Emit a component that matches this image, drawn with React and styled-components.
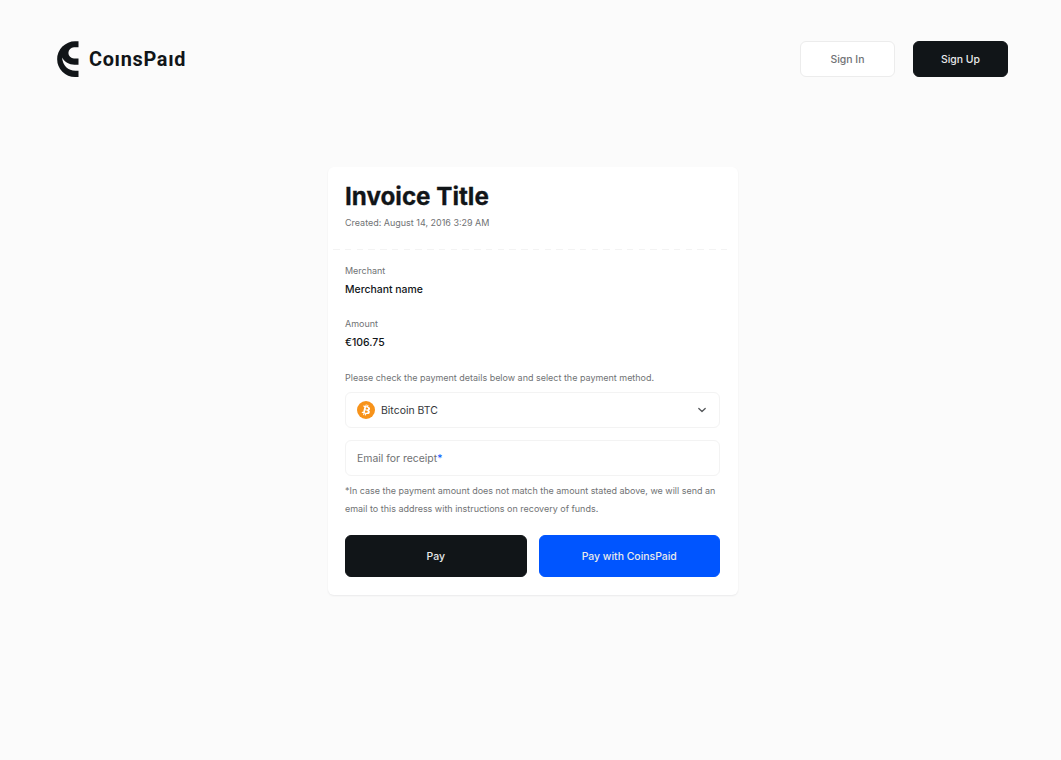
import React from "react";
import styled, { createGlobalStyle, css } from "styled-components";

const Global = createGlobalStyle`
  * { box-sizing: border-box; }
  body { margin: 0; background: #fbfbfb; font-family: Inter, "Liberation Sans", sans-serif; color: #111518; }
  button, input { font-family: inherit; }
`;

const Page = styled.div`
  min-height: 760px;
  display: flex;
  flex-direction: column;
  align-items: center;
`;

const Header = styled.header`
  width: 100%;
  height: 118px;
  padding: 0 53px 0 57px;
  display: flex;
  align-items: center;
  justify-content: space-between;
`;

const Logo = styled.svg`
  display: block;
  width: 132px;
  height: 36px;
`;

const Wordmark = styled.text`
  font-family: Roboto, sans-serif;
  font-size: 20.5px;
  font-weight: 700;
  fill: #111518;
`;

const Nav = styled.nav`
  display: flex;
  gap: 18px;
`;

const Button = styled.button`
  border: 1px solid transparent;
  border-radius: 6px;
  padding: 0;
  font-size: 10.43px;
  font-weight: 500;
  color: #e9eaea;
  background: ${(p) => (p.$tone === "blue" ? "#0055ff" : "#111518")};
  border-color: ${(p) => (p.$tone === "blue" ? "#0055ff" : "#111518")};
  ${(p) => p.$tone === "light" && css`
    background: #fff;
    border-color: #ececec;
    color: #707274;
  `}
`;

const NavButton = styled(Button)`
  width: 95px;
  height: 36px;
`;

const Card = styled.main`
  width: 410px;
  height: 428px;
  margin: 49px 0 0 4px;
  background: #fff;
  border-radius: 6px;
  box-shadow: 0 1px 2px rgba(17, 21, 24, 0.07);
`;

const CardHead = styled.div`
  height: 82px;
  padding: 15px 17.5px 0;
`;

const Title = styled.h1`
  margin: 0;
  font-size: 24.2px;
  line-height: 30px;
  font-weight: 700;
  -webkit-text-stroke: 0.3px #111518;
`;

const Small = styled.p`
  margin: 0;
  font-size: 8.97px;
  line-height: 18px;
  color: #707274;
`;

const Created = styled(Small)`
  margin-top: 2px;
`;

const Divider = styled.div`
  height: 1px;
  margin: 0 5px;
  background: repeating-linear-gradient(90deg, #f3f3f3 0 6.5px, transparent 6.5px 11.75px);
`;

const CardBody = styled.div`
  padding: 12px 17.5px 0;
`;

const Detail = styled.div`
  height: 53px;
`;

const Value = styled.p`
  margin: 0.5px 0 0;
  font-size: 10.45px;
  line-height: 18px;
  font-weight: 500;
`;

const Instruction = styled(Small)`
  padding-top: 1px;
`;

const Field = styled.div`
  height: 36px;
  margin-bottom: 12px;
  padding: 0 11px;
  display: flex;
  align-items: center;
  border: 1px solid #f3f3f3;
  border-radius: 6px;
  font-size: 10.45px;
  color: ${(p) => (p.$muted ? "#707274" : "#34373a")};
`;

const Select = styled(Field)`
  margin-top: 5px;
  gap: 6px;
`;

const Chevron = styled.svg`
  margin: 0 1px 0 auto;
`;

const Star = styled.span`
  color: #0055ff;
`;

const Note = styled(Small)`
  margin-top: -6px;
`;

const Actions = styled.div`
  display: grid;
  grid-template-columns: 1fr 1fr;
  gap: 12px;
  margin-top: 17px;
`;

const ActionButton = styled(Button)`
  height: 42px;
`;

export default function App() {
  return (
    <>
      <Global />
      <Page>
        <Header>
          <Logo viewBox="0 0 132 36" aria-label="CoinsPaid">
            <path fill="#111518" d="M21.500.3H18A17.850 17.850 0 0 0 18 36h3.500v-6.200H18.500C11 29.800 5.800 24.500 5 16.500c2.500 4.500 7 7.200 12.500 7.200h4v-6.200H17a5.600 5.600 0 0 1 0-11.200h4.500z" />
            <Wordmark transform="translate(32 24.900) scale(0.970 1)" textLength="99.500" lengthAdjust="spacing">CoınsPaıd</Wordmark>
          </Logo>
          <Nav>
            <NavButton $tone="light">Sign In</NavButton>
            <NavButton $tone="dark">Sign Up</NavButton>
          </Nav>
        </Header>
        <Card>
          <CardHead>
            <Title>Invoice Title</Title>
            <Created>Created: August 14, 2016 3:29 AM</Created>
          </CardHead>
          <Divider />
          <CardBody>
            <Detail>
              <Small>Merchant</Small>
              <Value>Merchant name</Value>
            </Detail>
            <Detail>
              <Small>Amount</Small>
              <Value>€106.75</Value>
            </Detail>
            <Instruction>Please check the payment details below and select the payment method.</Instruction>
            <Select>
              <svg width="18" height="18" viewBox="0 0 32 32">
                <circle cx="16" cy="16" r="16" fill="#f7931a" />
                <path fill="#fff" d="M23.189 14.020c.314-2.096-1.283-3.223-3.465-3.975l.708-2.840-1.728-.43-.69 2.765c-.454-.114-.92-.22-1.385-.326l.695-2.783L15.596 6l-.708 2.839c-.376-.086-.746-.17-1.104-.26l.002-.009-2.384-.595-.46 1.846s1.283.294 1.256.312c.7.175.826.638.805 1.006l-.806 3.235c.048.012.11.030.180.057l-.183-.045-1.130 4.532c-.086.212-.303.531-.793.410.018.025-1.256-.313-1.256-.313l-.858 1.978 2.250.561c.418.105.828.215 1.231.318l-.715 2.872 1.727.430.708-2.840c.472.127.930.245 1.378.357l-.706 2.828 1.728.430.715-2.866c2.948.558 5.164.333 6.097-2.333.752-2.146-.037-3.385-1.588-4.192 1.130-.260 1.980-1.003 2.207-2.538zm-3.950 5.538c-.533 2.147-4.148.986-5.320.695l.950-3.805c1.172.293 4.929.872 4.370 3.110zm.535-5.569c-.487 1.953-3.495.960-4.470.717l.860-3.450c.975.243 4.118.696 3.610 2.733z" />
              </svg>
              Bitcoin BTC
              <Chevron width="10" height="10" viewBox="0 0 10 10" fill="none" stroke="#54575a" strokeWidth="1.300" strokeLinecap="round" strokeLinejoin="round">
                <path d="M1.800 3.500 5 6.500 8.200 3.500" />
              </Chevron>
            </Select>
            <Field $muted>Email for receipt<Star>*</Star></Field>
            <Note>
              *In case the payment amount does not match the amount stated above, we will send an<br />
              email to this address with instructions on recovery of funds.
            </Note>
            <Actions>
              <ActionButton $tone="dark">Pay</ActionButton>
              <ActionButton $tone="blue">Pay with CoinsPaid</ActionButton>
            </Actions>
          </CardBody>
        </Card>
      </Page>
    </>
  );
}
